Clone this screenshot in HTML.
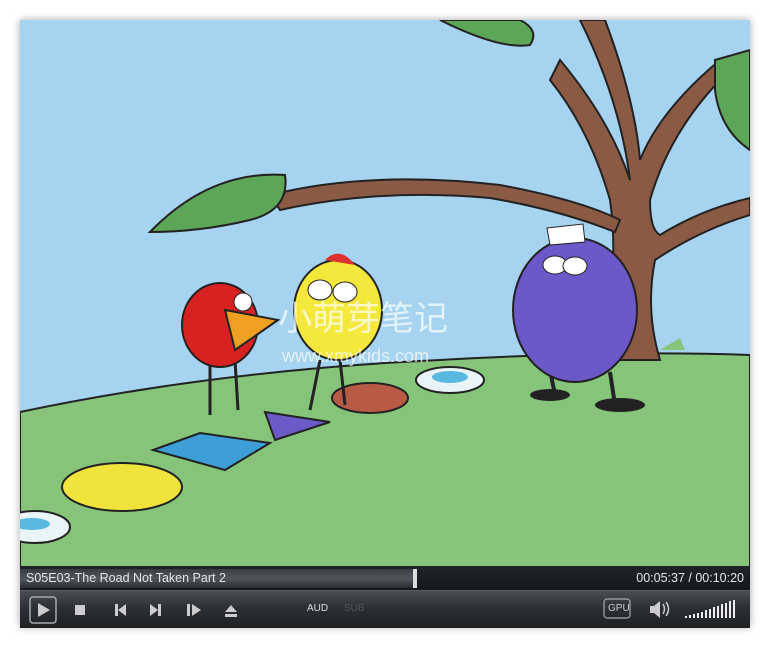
<!DOCTYPE html>
<html><head><meta charset="utf-8"><style>
body{margin:0;width:770px;height:647px;background:#fff;overflow:hidden;font-family:"Liberation Sans",sans-serif}
#f{position:absolute;left:20px;top:20px;width:730px;height:607px;box-shadow:0 0 8px rgba(0,0,0,.35)}
#v{position:absolute;left:0;top:0;width:730px;height:547px}
#pb{position:absolute;left:0;top:547px;width:730px;height:23px;background:linear-gradient(#202428,#15181b)}
#fill{position:absolute;left:0;top:2px;width:396px;height:19px;background:linear-gradient(#3a3f44,#50555a 50%,#2a2e32)}
#knob{position:absolute;left:393px;top:2px;width:4px;height:19px;background:#ddd}
#ttl{position:absolute;left:6px;top:4px;color:#e6e6e6;font-size:12.5px}
#tm{position:absolute;right:6px;top:4px;color:#e6e6e6;font-size:12.5px}
#cb{position:absolute;left:0;top:570px;width:730px;height:37px;background:linear-gradient(#4a4e53,#2c2f33 45%,#1f2225);border-top:1px solid #5a5e62}
.t{position:absolute;color:#ddd;font-size:10px}
</style></head><body>
<div id="f">
<svg id="v" width="730" height="547" viewBox="0 0 730 547">
<rect width="730" height="547" fill="#a6d3ef"/>
<path d="M0 392 Q200 350 420 340 Q600 330 730 335 L730 547 L0 547Z" fill="#86c47a" stroke="#222" stroke-width="2"/>
<path d="M640 330 L660 318 L665 330Z" fill="#86c47a"/>
<path d="M580 340 Q600 250 590 180 Q570 110 530 60 L540 40 Q590 100 610 160 Q600 80 560 0 L585 0 Q615 80 620 140 Q640 90 700 40 L705 55 Q650 110 630 180 Q630 210 640 215 Q680 190 730 178 L730 195 Q680 210 635 240 Q625 290 640 340Z" fill="#8b5a44" stroke="#222" stroke-width="2"/>
<path d="M250 175 Q350 150 480 165 Q560 180 600 200 L595 212 Q540 190 470 178 Q360 168 260 190Z" fill="#8b5a44" stroke="#222" stroke-width="2"/>
<path d="M130 212 Q190 150 265 155 Q270 190 230 200 Q180 212 130 212Z" fill="#5ea657" stroke="#222" stroke-width="2"/>
<path d="M420 0 Q480 30 510 25 Q520 10 500 0Z" fill="#5ea657" stroke="#222" stroke-width="2"/>
<path d="M695 40 Q730 30 730 30 L730 130 Q700 110 695 70Z" fill="#5ea657" stroke="#222" stroke-width="2"/>
<ellipse cx="102" cy="467" rx="60" ry="24" fill="#f0e43c" stroke="#222" stroke-width="2"/>
<path d="M133 430 L180 413 L250 423 L205 450Z" fill="#3e9fd8" stroke="#222" stroke-width="2"/>
<path d="M245 392 L310 402 L255 420Z" fill="#6a5bc8" stroke="#222" stroke-width="2"/>
<ellipse cx="350" cy="378" rx="38" ry="15" fill="#b95a45" stroke="#222" stroke-width="2"/>
<ellipse cx="430" cy="360" rx="34" ry="13" fill="#e8f4f8" stroke="#222" stroke-width="2"/>
<ellipse cx="430" cy="357" rx="18" ry="6" fill="#58b8e0"/>
<ellipse cx="15" cy="507" rx="35" ry="16" fill="#e8f4f8" stroke="#222" stroke-width="2"/>
<ellipse cx="12" cy="504" rx="18" ry="6" fill="#58b8e0"/>
<path d="M190 340 L190 395 M215 340 L218 390" stroke="#222" stroke-width="3"/>
<ellipse cx="200" cy="305" rx="38" ry="42" fill="#d82222" stroke="#222" stroke-width="2"/>
<path d="M205 290 L258 300 L215 330Z" fill="#f0a020" stroke="#222" stroke-width="2"/>
<circle cx="223" cy="282" r="9" fill="#fff" stroke="#222"/>
<path d="M300 340 L290 390 M320 340 L325 385" stroke="#222" stroke-width="3"/>
<ellipse cx="318" cy="290" rx="44" ry="50" fill="#f5e83c" stroke="#222" stroke-width="2"/>
<path d="M305 240 Q320 225 335 245Z" fill="#e03030"/>
<ellipse cx="300" cy="270" rx="12" ry="10" fill="#fff" stroke="#222"/>
<ellipse cx="325" cy="272" rx="12" ry="10" fill="#fff" stroke="#222"/>
<path d="M530 350 L535 375 M590 352 L595 385" stroke="#222" stroke-width="4"/>
<ellipse cx="555" cy="290" rx="62" ry="72" fill="#6c58c8" stroke="#222" stroke-width="2"/>
<path d="M527 208 L563 204 L565 222 L530 225Z" fill="#fff" stroke="#222"/>
<ellipse cx="535" cy="245" rx="12" ry="9" fill="#fff" stroke="#222"/>
<ellipse cx="555" cy="246" rx="12" ry="9" fill="#fff" stroke="#222"/>
<ellipse cx="530" cy="375" rx="20" ry="6" fill="#222"/><ellipse cx="600" cy="385" rx="25" ry="7" fill="#222"/>
<text x="258" y="310" font-size="34" fill="#fff" fill-opacity=".7" font-family="Noto Sans CJK SC,sans-serif">小萌芽笔记</text>
<text x="262" y="342" font-size="18" fill="#fff" fill-opacity=".7">www.xmykids.com</text>
</svg>
<div id="pb"><div id="fill"></div><div id="knob"></div><div id="ttl">S05E03-The Road Not Taken Part 2</div><div id="tm">00:05:37 / 00:10:20</div></div>
<div id="cb">
<svg width="730" height="37" style="position:absolute;left:0;top:0">
<rect x="10" y="6" width="26" height="26" rx="3" fill="none" stroke="#aaa" stroke-width="1.5"/>
<path d="M18 12 L30 19 L18 26Z" fill="#ccc"/>
<rect x="55" y="14" width="10" height="10" fill="#ccc"/>
<path d="M95 13h3v12h-3z M98 19 L106 13 V25Z" fill="#ccc"/>
<path d="M130 13 L138 19 L130 25Z M138 13h3v12h-3z" fill="#ccc"/>
<path d="M167 13h3v12h-3z M172 13 L181 19 L172 25Z" fill="#ccc"/>
<path d="M205 21 L211 14 L217 21Z M205 23h12v3h-12z" fill="#ccc"/>
<rect x="584" y="8" width="26" height="19" rx="3" fill="none" stroke="#aaa" stroke-width="1.2"/>
<path d="M630 15h4l6-5v17l-6-5h-4z" fill="#ccc"/>
<path d="M643 13 q3 5 0 10 M646 11 q5 7 0 14" stroke="#ccc" fill="none" stroke-width="1.5"/>
</svg>
<div class="t" style="left:287px;top:12px">AUD</div>
<div class="t" style="left:324px;top:12px;color:#555">SUB</div>
<div class="t" style="left:588px;top:12px;color:#ccc">GPU</div>
<svg width="60" height="37" style="position:absolute;left:663px;top:0">
<g fill="#eee">
<rect x="2" y="25" width="2" height="2"/><rect x="6" y="24" width="2" height="3"/><rect x="10" y="23" width="2" height="4"/><rect x="14" y="22" width="2" height="5"/><rect x="18" y="21" width="2" height="6"/><rect x="22" y="19" width="2" height="8"/><rect x="26" y="18" width="2" height="9"/><rect x="30" y="16" width="2" height="11"/><rect x="34" y="15" width="2" height="12"/><rect x="38" y="13" width="2" height="14"/><rect x="42" y="12" width="2" height="15"/><rect x="46" y="10" width="2" height="17"/><rect x="50" y="9" width="2" height="18"/>
</g></svg>
</div>
</div>
</body></html>
